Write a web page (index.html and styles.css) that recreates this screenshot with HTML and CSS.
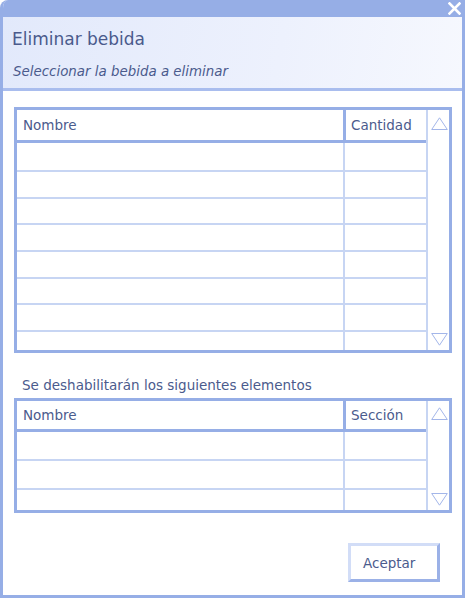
FILE: index.html
```html
<!DOCTYPE html>
<html lang="es">
<head>
    <meta charset="UTF-8">
    <title>Eliminar bebida</title>
    <link rel="stylesheet" href="styles.css">
</head>
<body>
    <div class="window">
        <!-- barra de titulo -->
        <div class="titlebar">
            <svg class="close" width="13" height="13" viewBox="0 0 13 13">
                <path d="M1.5 1.5 L11.5 11.5 M11.5 1.5 L1.5 11.5" stroke="#fff" stroke-width="2.6" stroke-linecap="square"/>
            </svg>
        </div>

        <div class="header">
            <div class="title">Eliminar bebida</div>
            <div class="subtitle">Seleccionar la bebida a eliminar</div>
        </div>

        <div class="content">
            <!-- lista de bebidas -->
            <div class="list list-main">
                <div class="grid">
                    <div class="row head">
                        <div class="cell name">Nombre</div>
                        <div class="cell qty">Cantidad</div>
                    </div>
                    <div class="body">
                        <div class="row first"><div class="cell name"></div><div class="cell qty"></div></div>
                        <div class="row"><div class="cell name"></div><div class="cell qty"></div></div>
                        <div class="row"><div class="cell name"></div><div class="cell qty"></div></div>
                        <div class="row"><div class="cell name"></div><div class="cell qty"></div></div>
                        <div class="row"><div class="cell name"></div><div class="cell qty"></div></div>
                        <div class="row"><div class="cell name"></div><div class="cell qty"></div></div>
                        <div class="row"><div class="cell name"></div><div class="cell qty"></div></div>
                        <div class="row"><div class="cell name"></div><div class="cell qty"></div></div>
                    </div>
                </div>
                <div class="scroll">
                    <svg width="17" height="13" viewBox="0 0 17 13"><path d="M8.5 0.8 L16.3 12.5 L0.7 12.5 Z" fill="none" stroke="#a3b6e9" stroke-width="1"/></svg>
                    <svg width="17" height="13" viewBox="0 0 17 13"><path d="M0.7 0.5 L16.3 0.5 L8.5 12.2 Z" fill="none" stroke="#a3b6e9" stroke-width="1"/></svg>
                </div>
            </div>

            <div class="label">Se deshabilitarán los siguientes elementos</div>

            <!-- elementos afectados -->
            <div class="list list-small">
                <div class="grid">
                    <div class="row head">
                        <div class="cell name">Nombre</div>
                        <div class="cell qty">Sección</div>
                    </div>
                    <div class="body">
                        <div class="row first"><div class="cell name"></div><div class="cell qty"></div></div>
                        <div class="row first"><div class="cell name"></div><div class="cell qty"></div></div>
                        <div class="row"><div class="cell name"></div><div class="cell qty"></div></div>
                    </div>
                </div>
                <div class="scroll">
                    <svg width="17" height="13" viewBox="0 0 17 13"><path d="M8.5 0.8 L16.3 12.5 L0.7 12.5 Z" fill="none" stroke="#a3b6e9" stroke-width="1"/></svg>
                    <svg width="17" height="13" viewBox="0 0 17 13"><path d="M0.7 0.5 L16.3 0.5 L8.5 12.2 Z" fill="none" stroke="#a3b6e9" stroke-width="1"/></svg>
                </div>
            </div>

            <div class="actions">
                <button class="btn">Aceptar</button>
            </div>
        </div>
    </div>
</body>
</html>
```

FILE: styles.css
```css
body {
    margin: 0;
    background-color: #fff;
    font-family: "DejaVu Sans", "Liberation Sans", sans-serif;
    color: #4b5b8d;
}

.window {
    width: 465px;
    height: 598px;
    box-sizing: border-box;
    border: 3px solid #96aee6;
    border-top: 0;
    border-radius: 8px 0 0 0;
    overflow: hidden;
    display: flex;
    flex-direction: column;
    background-color: #fff;
}

.titlebar {
    height: 17px;
    flex: none;
    background-color: #96aee6;
    display: flex;
    justify-content: flex-end;
    padding-right: 1px;
}

.close {
    margin-top: 2px;
}

.header {
    height: 74px;
    flex: none;
    box-sizing: border-box;
    padding: 12px 0 0 9px;
    background: linear-gradient(100deg, #e2e9fb 0%, #edf1fd 60%, #f6f8fe 100%);
    border-bottom: 3px solid #a9bdee;
}

.title {
    font-size: 17px;
    line-height: 20px;
    color: #4a5a8c;
}

.subtitle {
    margin-top: 15px;
    font-size: 13.4px;
    line-height: 16px;
    font-style: italic;
    padding-left: 1px;
}

.content {
    flex: 1;
    padding: 16px 10px 0 11px;
}

.list {
    display: flex;
    box-sizing: border-box;
    border: 3px solid #96aee6;
    overflow: hidden;
}

.list-main {
    height: 246px;
}

.list-small {
    height: 115px;
    margin-top: 5px;
}

.grid {
    flex: 1;
    display: flex;
    flex-direction: column;
    overflow: hidden;
}

.row {
    display: flex;
    box-sizing: border-box;
    height: 26.67px;
    border-bottom: 2px solid #c7d5f3;
    flex: none;
}

.row.first {
    height: 29px;
}

.row.head {
    height: 33px;
    border-bottom: 3px solid #96aee6;
    font-size: 13.5px;
    line-height: 31px;
}

.list-small .row.head {
    height: 31px;
    line-height: 29px;
}

.body {
    flex: 1;
    overflow: hidden;
}

.cell {
    box-sizing: border-box;
    white-space: nowrap;
}

.cell.name {
    width: 328px;
    border-right: 2px solid #c7d5f3;
    padding-left: 6px;
}

.head .cell.name {
    width: 329px;
    border-right: 3px solid #96aee6;
}

.cell.qty {
    flex: 1;
    padding-left: 5px;
}

.scroll {
    width: 23px;
    flex: none;
    border-left: 2px solid #c7d5f3;
    display: flex;
    flex-direction: column;
    justify-content: space-between;
    align-items: center;
    padding: 7px 0 4px 1px;
    box-sizing: border-box;
}

.list-small .scroll {
    padding-top: 6px;
}

.scroll svg {
    display: block;
}

.label {
    margin-top: 24px;
    padding-left: 8px;
    font-size: 13.5px;
    line-height: 16px;
}

.actions {
    display: flex;
    justify-content: flex-end;
    margin-top: 30px;
    padding-right: 12px;
}

.btn {
    width: 92px;
    height: 39px;
    box-sizing: border-box;
    border: 3px solid;
    border-color: #d2ddf7 #9bb1e7 #9bb1e7 #d2ddf7;
    background-color: #fff;
    font-family: "DejaVu Sans", "Liberation Sans", sans-serif;
    font-size: 13.5px;
    color: #4b5b8d;
    text-align: left;
    padding: 0 0 0 12px;
}
```
